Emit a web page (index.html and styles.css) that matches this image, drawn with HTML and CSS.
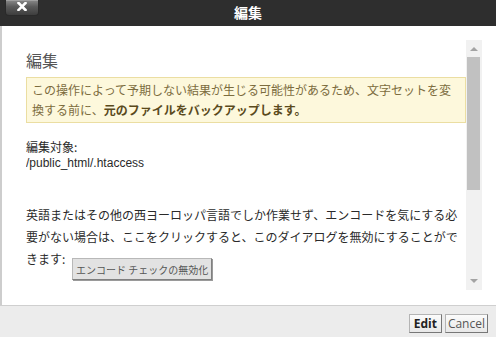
FILE: index.html
```html
<!DOCTYPE html>
<html lang="ja">
<head>
<meta charset="utf-8">
<title>編集</title>
<link rel="stylesheet" href="styles.css">
</head>
<body>
<div class="dialog">
  <div class="titlebar">
    <button class="close" type="button" aria-label="閉じる">
      <svg width="10" height="9" viewBox="0 0 10 9"><path d="M1.5 1 L8.5 8 M8.5 1 L1.5 8" stroke="#fff" stroke-width="2.6" stroke-linecap="square"/></svg>
    </button>
    <div class="title">編集</div>
    <div></div>
  </div>
  <div class="body">
    <div class="content">
      <h2 class="heading">編集</h2>
      <div class="warning">この操作によって予期しない結果が生じる可能性があるため、文字セットを変換する前に、<b>元のファイルをバックアップします。</b></div>
      <div class="target">
        <div class="target-label">編集対象:</div>
        <div class="target-path">/public_html/.htaccess</div>
      </div>
      <p class="note">英語またはその他の西ヨーロッパ言語でしか作業せず、エンコードを気にする必要がない場合は、ここをクリックすると、このダイアログを無効にすることができます: <button class="disable" type="button">エンコード チェックの無効化</button></p>
    </div>
    <div class="scrollbar">
      <div class="arrow up"></div>
      <div class="thumb"></div>
      <div class="track"></div>
      <div class="arrow down"></div>
    </div>
  </div>
  <div class="footer">
    <button class="btn btn-primary" type="button">Edit</button>
    <button class="btn" type="button">Cancel</button>
  </div>
</div>
</body>
</html>
```

FILE: styles.css
```css
html, body {
  margin: 0;
  padding: 0;
  background: #fff;
}
body {
  font-family: "Liberation Sans", "Noto Sans CJK JP", sans-serif;
  color: #333;
  width: 496px;
  height: 337px;
  overflow: hidden;
}
.dialog {
  display: flex;
  flex-direction: column;
  height: 337px;
}
.titlebar {
  height: 26px;
  background: #2e2e2e;
  display: grid;
  grid-template-columns: 1fr auto 1fr;
  align-items: start;
  flex: none;
}
.close {
  justify-self: start;
  margin-left: 5px;
  width: 34px;
  height: 16px;
  padding: 0;
  border: 1px solid #2a2a2a;
  border-top: none;
  border-radius: 0 0 4px 4px;
  background: linear-gradient(#8a8a8a, #5a5a5a 45%, #3e3e3e);
  box-shadow: inset 0 1px 0 #a0a0a0;
  display: flex;
  align-items: center;
  justify-content: center;
  padding-bottom: 2px;
}
.close svg { display: block; }
.title {
  color: #fff;
  font-family: "Noto Sans CJK JP", sans-serif;
  font-weight: 700;
  font-size: 14px;
  line-height: 26px;
  height: 26px;
  margin-top: -1px;
}
.body {
  flex: 1;
  display: flex;
  border-left: 2px solid #cdcdcd;
  padding: 14px 14px 16px 24px;
  min-height: 0;
}
.content {
  width: 440px;
  overflow: hidden;
  font-family: "Liberation Sans", "Noto Sans CJK JP", sans-serif;
  font-size: 12px;
}
.heading {
  font-family: "Noto Sans CJK JP", sans-serif;
  font-weight: 400;
  font-size: 16px;
  line-height: 20px;
  color: #555;
  margin: 10px 0 7px;
}
.warning {
  background: #fdf8dc;
  border: 1px solid #ebdea2;
  padding: 2px 5px;
  line-height: 20px;
  color: #7c6c3e;
  font-family: "Noto Sans CJK JP", sans-serif;
}
.warning b {
  color: #5a4a1c;
  font-weight: 700;
}
.target {
  margin-top: 16px;
  line-height: 16px;
  color: #2a2a2a;
}
.target-label {
  font-family: "Noto Sans CJK JP", sans-serif;
}
.note {
  margin: 33px 0 0;
  line-height: 22px;
  color: #2a2a2a;
  font-family: "Noto Sans CJK JP", sans-serif;
}
.disable {
  vertical-align: top;
  margin: 10px 0 0 4px;
  height: 22px;
  padding: 0 3px;
  font-family: "Noto Sans CJK JP", sans-serif;
  font-size: 10px;
  color: #555;
  background: #e2e2e2;
  border: 1px solid #b8b8b8;
  border-right-color: #808080;
  border-bottom-color: #808080;
  box-shadow: 1px 1px 0 #9a9a9a;
  border-radius: 0;
}
.scrollbar {
  width: 16px;
  height: 250px;
  background: #f1f1f1;
  display: flex;
  flex-direction: column;
  flex: none;
}
.arrow {
  height: 17px;
  flex: none;
  position: relative;
}
.arrow::after {
  content: "";
  position: absolute;
  left: 4px;
  width: 0;
  height: 0;
  border-left: 4px solid transparent;
  border-right: 4px solid transparent;
}
.arrow.up::after {
  top: 7px;
  border-bottom: 4px solid #a3a3a3;
}
.arrow.down::after {
  top: 6px;
  border-top: 4px solid #a3a3a3;
}
.thumb {
  height: 133px;
  margin: 0 2px 0 1px;
  background: #c1c1c1;
  flex: none;
}
.track { flex: 1; }
.footer {
  flex: none;
  border-top: 1px solid #cfcfcf;
  background: #ececec;
  display: flex;
  justify-content: flex-end;
  align-items: flex-start;
  gap: 3px;
  padding: 8px 8px 0 0;
  box-sizing: border-box;
  height: 32px;
}
.btn {
  height: 19px;
  padding: 0 2px;
  font-family: "Open Sans", "Liberation Sans", sans-serif;
  font-size: 12px;
  line-height: 16px;
  color: #555;
  background: linear-gradient(#fbfbfb, #e8e8e8);
  border: 1px solid #b4b4b4;
  border-right-color: #777;
  border-bottom-color: #777;
  border-radius: 0;
}
.btn-primary {
  font-weight: 700;
  color: #222;
  padding: 0 4px;
}
```
